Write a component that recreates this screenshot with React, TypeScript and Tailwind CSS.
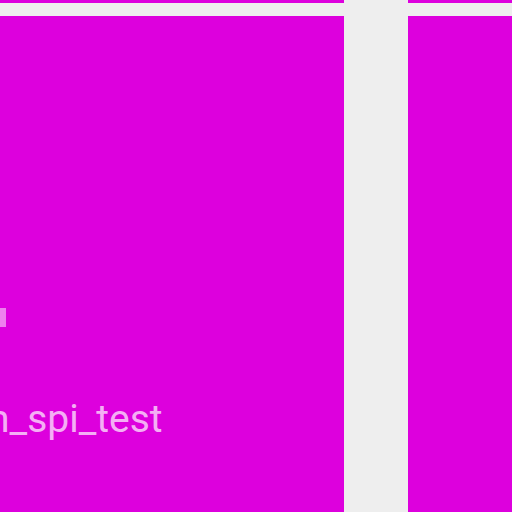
import React from 'react';

const font = { fontFamily: 'Roboto, "Noto Sans", sans-serif' };

const App: React.FC = () => {
  return (
    <div className="w-[512px] h-[512px] overflow-hidden bg-[#eeeeee]" style={font}>
      {/* tail of the previous row of tiles */}
      <div className="flex h-[3px] gap-[64px]">
        <div className="w-[344px] bg-[#dd00dd]" />
        <div className="flex-1 bg-[#dd00dd]" />
      </div>

      <div className="mt-[13px] flex h-[496px] gap-[64px]">
        <div className="w-[344px] shrink-0 bg-[#dd00dd] overflow-hidden">
          <div className="mt-[292px] w-[6px] h-[19px] bg-white/50" />
          <div className="mt-[73px] ml-[-12px] whitespace-nowrap text-[39px] leading-[39px] text-white/70">
            n_spi_test
          </div>
        </div>
        <div className="flex-1 bg-[#dd00dd] overflow-hidden">
          <div className="mt-[384px] ml-[103px] whitespace-nowrap text-[39px] leading-[39px] text-white/70">
            spi_test
          </div>
        </div>
      </div>
    </div>
  );
};

export default App;
